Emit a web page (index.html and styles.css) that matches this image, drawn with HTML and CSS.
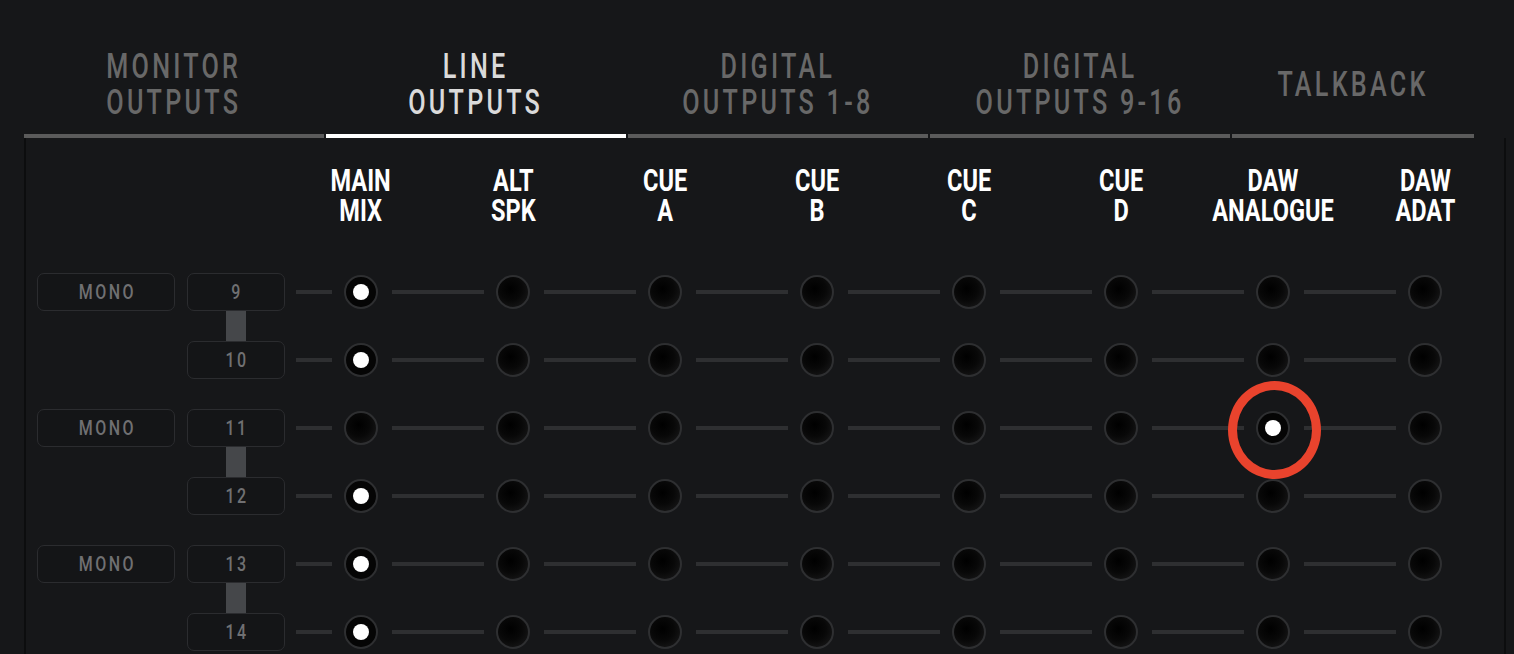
FILE: index.html
```html
<!DOCTYPE html>
<html lang="en">
<head>
<meta charset="utf-8">
<title>Line Outputs</title>
<link rel="stylesheet" href="styles.css">
</head>
<body>
<div class="app">
  <nav class="tabs">
    <div class="tab"><span class="tab-label">MONITOR<br>OUTPUTS</span></div>
    <div class="tab active"><span class="tab-label">LINE<br>OUTPUTS</span></div>
    <div class="tab"><span class="tab-label">DIGITAL<br>OUTPUTS 1-8</span></div>
    <div class="tab"><span class="tab-label">DIGITAL<br>OUTPUTS 9-16</span></div>
    <div class="tab tab-last"><span class="tab-label">TALKBACK</span></div>
  </nav>
  <section class="panel">
    <div class="matrix">
      <div class="corner"></div>
      <div class="col-head"><span class="head-label">MAIN<br>MIX</span></div>
      <div class="col-head"><span class="head-label">ALT<br>SPK</span></div>
      <div class="col-head"><span class="head-label">CUE<br>A</span></div>
      <div class="col-head"><span class="head-label">CUE<br>B</span></div>
      <div class="col-head"><span class="head-label">CUE<br>C</span></div>
      <div class="col-head"><span class="head-label">CUE<br>D</span></div>
      <div class="col-head"><span class="head-label">DAW<br>ANALOGUE</span></div>
      <div class="col-head"><span class="head-label">DAW<br>ADAT</span></div>

      <!-- pair 9/10 -->
      <div class="pair">
        <div class="box mono"><span class="box-text">MONO</span></div>
        <div class="chans">
          <div class="box chan"><span class="box-text">9</span></div>
          <div class="link"></div>
          <div class="box chan"><span class="box-text">10</span></div>
        </div>
      </div>
      <div class="cell first"><i class="seg seg-l"></i><b class="pad on"></b><i class="seg seg-r"></i></div>
      <div class="cell"><i class="seg seg-l"></i><b class="pad"></b><i class="seg seg-r"></i></div>
      <div class="cell"><i class="seg seg-l"></i><b class="pad"></b><i class="seg seg-r"></i></div>
      <div class="cell"><i class="seg seg-l"></i><b class="pad"></b><i class="seg seg-r"></i></div>
      <div class="cell"><i class="seg seg-l"></i><b class="pad"></b><i class="seg seg-r"></i></div>
      <div class="cell"><i class="seg seg-l"></i><b class="pad"></b><i class="seg seg-r"></i></div>
      <div class="cell"><i class="seg seg-l"></i><b class="pad"></b><i class="seg seg-r"></i></div>
      <div class="cell last"><i class="seg seg-l"></i><b class="pad"></b><i class="seg seg-r"></i></div>

      <div class="cell first"><i class="seg seg-l"></i><b class="pad on"></b><i class="seg seg-r"></i></div>
      <div class="cell"><i class="seg seg-l"></i><b class="pad"></b><i class="seg seg-r"></i></div>
      <div class="cell"><i class="seg seg-l"></i><b class="pad"></b><i class="seg seg-r"></i></div>
      <div class="cell"><i class="seg seg-l"></i><b class="pad"></b><i class="seg seg-r"></i></div>
      <div class="cell"><i class="seg seg-l"></i><b class="pad"></b><i class="seg seg-r"></i></div>
      <div class="cell"><i class="seg seg-l"></i><b class="pad"></b><i class="seg seg-r"></i></div>
      <div class="cell"><i class="seg seg-l"></i><b class="pad"></b><i class="seg seg-r"></i></div>
      <div class="cell last"><i class="seg seg-l"></i><b class="pad"></b><i class="seg seg-r"></i></div>

      <!-- pair 11/12 -->
      <div class="pair">
        <div class="box mono"><span class="box-text">MONO</span></div>
        <div class="chans">
          <div class="box chan"><span class="box-text">11</span></div>
          <div class="link"></div>
          <div class="box chan"><span class="box-text">12</span></div>
        </div>
      </div>
      <div class="cell first"><i class="seg seg-l"></i><b class="pad"></b><i class="seg seg-r"></i></div>
      <div class="cell"><i class="seg seg-l"></i><b class="pad"></b><i class="seg seg-r"></i></div>
      <div class="cell"><i class="seg seg-l"></i><b class="pad"></b><i class="seg seg-r"></i></div>
      <div class="cell"><i class="seg seg-l"></i><b class="pad"></b><i class="seg seg-r"></i></div>
      <div class="cell"><i class="seg seg-l"></i><b class="pad"></b><i class="seg seg-r"></i></div>
      <div class="cell"><i class="seg seg-l"></i><b class="pad"></b><i class="seg seg-r"></i></div>
      <div class="cell"><i class="seg seg-l"></i><b class="pad on"><span class="mark"></span></b><i class="seg seg-r"></i></div>
      <div class="cell last"><i class="seg seg-l"></i><b class="pad"></b><i class="seg seg-r"></i></div>

      <div class="cell first"><i class="seg seg-l"></i><b class="pad on"></b><i class="seg seg-r"></i></div>
      <div class="cell"><i class="seg seg-l"></i><b class="pad"></b><i class="seg seg-r"></i></div>
      <div class="cell"><i class="seg seg-l"></i><b class="pad"></b><i class="seg seg-r"></i></div>
      <div class="cell"><i class="seg seg-l"></i><b class="pad"></b><i class="seg seg-r"></i></div>
      <div class="cell"><i class="seg seg-l"></i><b class="pad"></b><i class="seg seg-r"></i></div>
      <div class="cell"><i class="seg seg-l"></i><b class="pad"></b><i class="seg seg-r"></i></div>
      <div class="cell"><i class="seg seg-l"></i><b class="pad"></b><i class="seg seg-r"></i></div>
      <div class="cell last"><i class="seg seg-l"></i><b class="pad"></b><i class="seg seg-r"></i></div>

      <!-- pair 13/14 -->
      <div class="pair">
        <div class="box mono"><span class="box-text">MONO</span></div>
        <div class="chans">
          <div class="box chan"><span class="box-text">13</span></div>
          <div class="link"></div>
          <div class="box chan"><span class="box-text">14</span></div>
        </div>
      </div>
      <div class="cell first"><i class="seg seg-l"></i><b class="pad on"></b><i class="seg seg-r"></i></div>
      <div class="cell"><i class="seg seg-l"></i><b class="pad"></b><i class="seg seg-r"></i></div>
      <div class="cell"><i class="seg seg-l"></i><b class="pad"></b><i class="seg seg-r"></i></div>
      <div class="cell"><i class="seg seg-l"></i><b class="pad"></b><i class="seg seg-r"></i></div>
      <div class="cell"><i class="seg seg-l"></i><b class="pad"></b><i class="seg seg-r"></i></div>
      <div class="cell"><i class="seg seg-l"></i><b class="pad"></b><i class="seg seg-r"></i></div>
      <div class="cell"><i class="seg seg-l"></i><b class="pad"></b><i class="seg seg-r"></i></div>
      <div class="cell last"><i class="seg seg-l"></i><b class="pad"></b><i class="seg seg-r"></i></div>

      <div class="cell first"><i class="seg seg-l"></i><b class="pad on"></b><i class="seg seg-r"></i></div>
      <div class="cell"><i class="seg seg-l"></i><b class="pad"></b><i class="seg seg-r"></i></div>
      <div class="cell"><i class="seg seg-l"></i><b class="pad"></b><i class="seg seg-r"></i></div>
      <div class="cell"><i class="seg seg-l"></i><b class="pad"></b><i class="seg seg-r"></i></div>
      <div class="cell"><i class="seg seg-l"></i><b class="pad"></b><i class="seg seg-r"></i></div>
      <div class="cell"><i class="seg seg-l"></i><b class="pad"></b><i class="seg seg-r"></i></div>
      <div class="cell"><i class="seg seg-l"></i><b class="pad"></b><i class="seg seg-r"></i></div>
      <div class="cell last"><i class="seg seg-l"></i><b class="pad"></b><i class="seg seg-r"></i></div>
    </div>
  </section>
</div>
</body>
</html>
```

FILE: styles.css
```css
* { box-sizing: border-box; }

html, body {
  margin: 0;
  padding: 0;
  background: #161719;
  overflow: hidden;
}

body {
  font-family: Roboto, "Liberation Sans", sans-serif;
  color: #ddd;
  width: 1514px;
  height: 654px;
}

/* ---------- tabs ---------- */
.tabs {
  display: flex;
  gap: 2px;
  padding-left: 24px;
}

.tab {
  width: 300px;
  height: 138px;
  padding-top: 35px;
  border-bottom: 4px solid #5b5b5b;
  display: flex;
  align-items: center;
  justify-content: center;
  text-align: center;
}

.tab-last { width: 242px; }

.tab.active { border-bottom-color: #ffffff; }

.tab-label {
  display: inline-block;
  font-size: 35px;
  line-height: 36px;
  font-weight: 500;
  letter-spacing: 4.5px;
  color: #686868;
  transform: scaleX(0.72);
  white-space: nowrap;
}

.tab.active .tab-label { color: #dadada; }

/* ---------- panel ---------- */
.panel {
  margin-left: 24px;
  width: 1482px;
  height: 516px;
  border-left: 2px solid #0c0d0e;
  border-right: 2px solid #0c0d0e;
}

.matrix {
  display: grid;
  grid-template-columns: 259px repeat(8, 152px);
  grid-template-rows: 120px;
  grid-auto-rows: 68px;
}

.col-head {
  display: flex;
  justify-content: center;
  padding-top: 28px;
  text-align: center;
}

.head-label {
  display: inline-block;
  font-size: 31px;
  line-height: 30px;
  font-weight: 700;
  color: #ffffff;
  transform: scaleX(0.76);
  white-space: nowrap;
}

/* ---------- left channel controls ---------- */
.pair {
  grid-column: 1;
  grid-row: span 2;
  display: flex;
  align-items: flex-start;
  gap: 12px;
  padding: 15px 0 0 11px;
}

.box {
  height: 38px;
  border: 1px solid #2b2c2f;
  border-radius: 7px;
  background: #141517;
  display: flex;
  align-items: center;
  justify-content: center;
}

.box-text {
  display: inline-block;
  font-family: Roboto, "Liberation Sans", sans-serif;
  font-size: 20px;
  line-height: 20px;
  font-weight: 500;
  letter-spacing: 3px;
  padding-left: 3px;
  color: #707072;
  transform: scaleX(0.8);
  white-space: nowrap;
}

.mono { width: 138px; }

.chans {
  width: 98px;
  display: flex;
  flex-direction: column;
}

.chan { width: 98px; }

.link {
  width: 20px;
  height: 30px;
  margin-left: 39px;
  background: #45474a;
}

/* ---------- routing pads ---------- */
.cell {
  display: flex;
  align-items: center;
}

.seg {
  display: block;
  height: 4px;
  background: #2e2f31;
}

.seg-l { width: 47px; }
.seg-r { flex: 1; }

.first .seg-l { width: 36px; margin-left: 11px; }
.last .seg-r { visibility: hidden; }

.pad {
  position: relative;
  flex: none;
  width: 34px;
  height: 34px;
  margin: 0 14px 0 12px;
  border-radius: 50%;
  border: 2px solid #2e2f31;
  background: radial-gradient(circle at 42% 40%, #000 0%, #080808 45%, #1c1c1d 100%);
}

.pad.on {
  background: #050505;
}

.pad.on::before {
  content: "";
  position: absolute;
  left: 50%;
  top: 50%;
  width: 16px;
  height: 16px;
  margin: -8px 0 0 -8px;
  border-radius: 50%;
  background: #ffffff;
}

.mark {
  position: absolute;
  left: 50%;
  top: 50%;
  width: 93px;
  height: 98px;
  margin: -47px 0 0 -45px;
  border: 9px solid #e9432d;
  border-radius: 50%;
  pointer-events: none;
}
```
